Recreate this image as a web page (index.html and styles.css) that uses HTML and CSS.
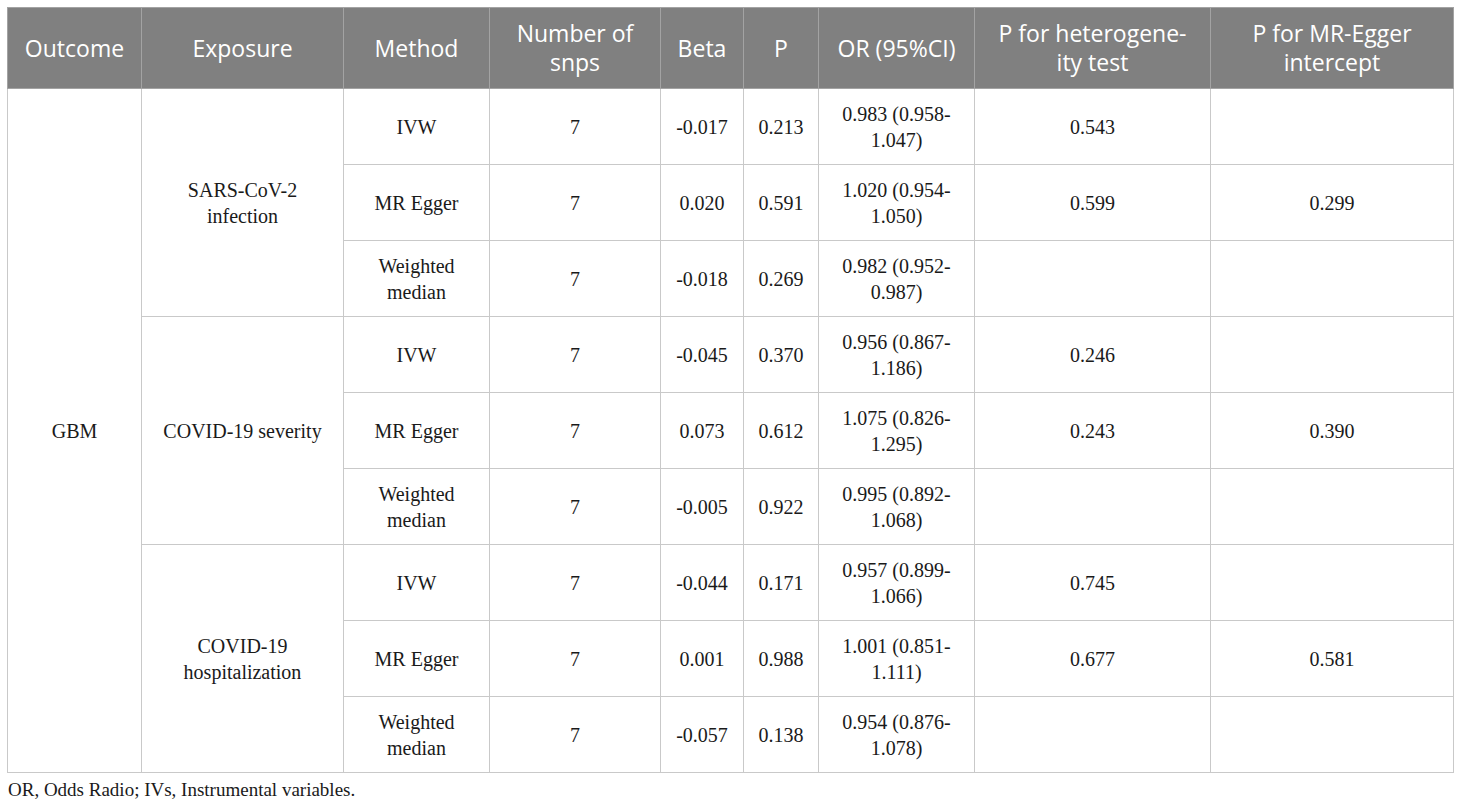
FILE: index.html
```html
<!DOCTYPE html>
<html>
<head>
<meta charset="utf-8">
<link rel="stylesheet" href="styles.css">
</head>
<body>
<div class="page">
<table class="results">
<colgroup>
<col class="c1"><col class="c2"><col class="c3"><col class="c4"><col class="c5"><col class="c6"><col class="c7"><col class="c8"><col class="c9">
</colgroup>
<thead>
<tr>
<th>Outcome</th><th>Exposure</th><th>Method</th><th>Number of snps</th><th>Beta</th><th>P</th><th>OR (95%CI)</th><th>P for heterogene-<br>ity test</th><th>P for MR-Egger intercept</th>
</tr>
</thead>
<tbody>
<tr>
<td rowspan="9">GBM</td>
<td rowspan="3">SARS-CoV-2<br>infection</td>
<td>IVW</td><td>7</td><td>-0.017</td><td>0.213</td><td>0.983 (0.958-<br>1.047)</td><td>0.543</td><td></td>
</tr>
<tr>
<td>MR Egger</td><td>7</td><td>0.020</td><td>0.591</td><td>1.020 (0.954-<br>1.050)</td><td>0.599</td><td>0.299</td>
</tr>
<tr>
<td>Weighted<br>median</td><td>7</td><td>-0.018</td><td>0.269</td><td>0.982 (0.952-<br>0.987)</td><td></td><td></td>
</tr>
<tr>
<td rowspan="3">COVID-19 severity</td>
<td>IVW</td><td>7</td><td>-0.045</td><td>0.370</td><td>0.956 (0.867-<br>1.186)</td><td>0.246</td><td></td>
</tr>
<tr>
<td>MR Egger</td><td>7</td><td>0.073</td><td>0.612</td><td>1.075 (0.826-<br>1.295)</td><td>0.243</td><td>0.390</td>
</tr>
<tr>
<td>Weighted<br>median</td><td>7</td><td>-0.005</td><td>0.922</td><td>0.995 (0.892-<br>1.068)</td><td></td><td></td>
</tr>
<tr>
<td rowspan="3">COVID-19<br>hospitalization</td>
<td>IVW</td><td>7</td><td>-0.044</td><td>0.171</td><td>0.957 (0.899-<br>1.066)</td><td>0.745</td><td></td>
</tr>
<tr>
<td>MR Egger</td><td>7</td><td>0.001</td><td>0.988</td><td>1.001 (0.851-<br>1.111)</td><td>0.677</td><td>0.581</td>
</tr>
<tr>
<td>Weighted<br>median</td><td>7</td><td>-0.057</td><td>0.138</td><td>0.954 (0.876-<br>1.078)</td><td></td><td></td>
</tr>
</tbody>
</table>
<p class="note">OR, Odds Radio; IVs, Instrumental variables.</p>
</div>
</body>
</html>
```

FILE: styles.css
```css
html, body {
  margin: 0;
  padding: 0;
  background: #ffffff;
}
.page {
  padding: 7px 7px 0 7px;
}
.results {
  width: 1446px;
  table-layout: fixed;
  border-collapse: collapse;
  font-family: "Liberation Serif", "Times New Roman", serif;
  font-size: 20px;
  color: #1a1a1a;
}
.c1 { width: 134px; }
.c2 { width: 202px; }
.c3 { width: 146px; }
.c4 { width: 171px; }
.c5 { width: 83px; }
.c6 { width: 75px; }
.c7 { width: 156px; }
.c8 { width: 236px; }
.c9 { width: 243px; }
.results thead tr {
  height: 81px;
}
.results th {
  background: #808080;
  color: #ffffff;
  font-family: "Open Sans", "Noto Sans", sans-serif;
  font-weight: 400;
  font-size: 23px;
  line-height: 29px;
  padding: 0 8px;
  text-align: center;
  vertical-align: middle;
  border: 1px solid #a3a3a3;
}
.results tbody tr {
  height: 76px;
}
.results td {
  border: 1px solid #c9c9c9;
  padding: 0 6px;
  text-align: center;
  vertical-align: middle;
  line-height: 26px;
}
.note {
  margin: 6px 0 0 1px;
  font-family: "Liberation Serif", "Times New Roman", serif;
  font-size: 19px;
  color: #1a1a1a;
}
```
